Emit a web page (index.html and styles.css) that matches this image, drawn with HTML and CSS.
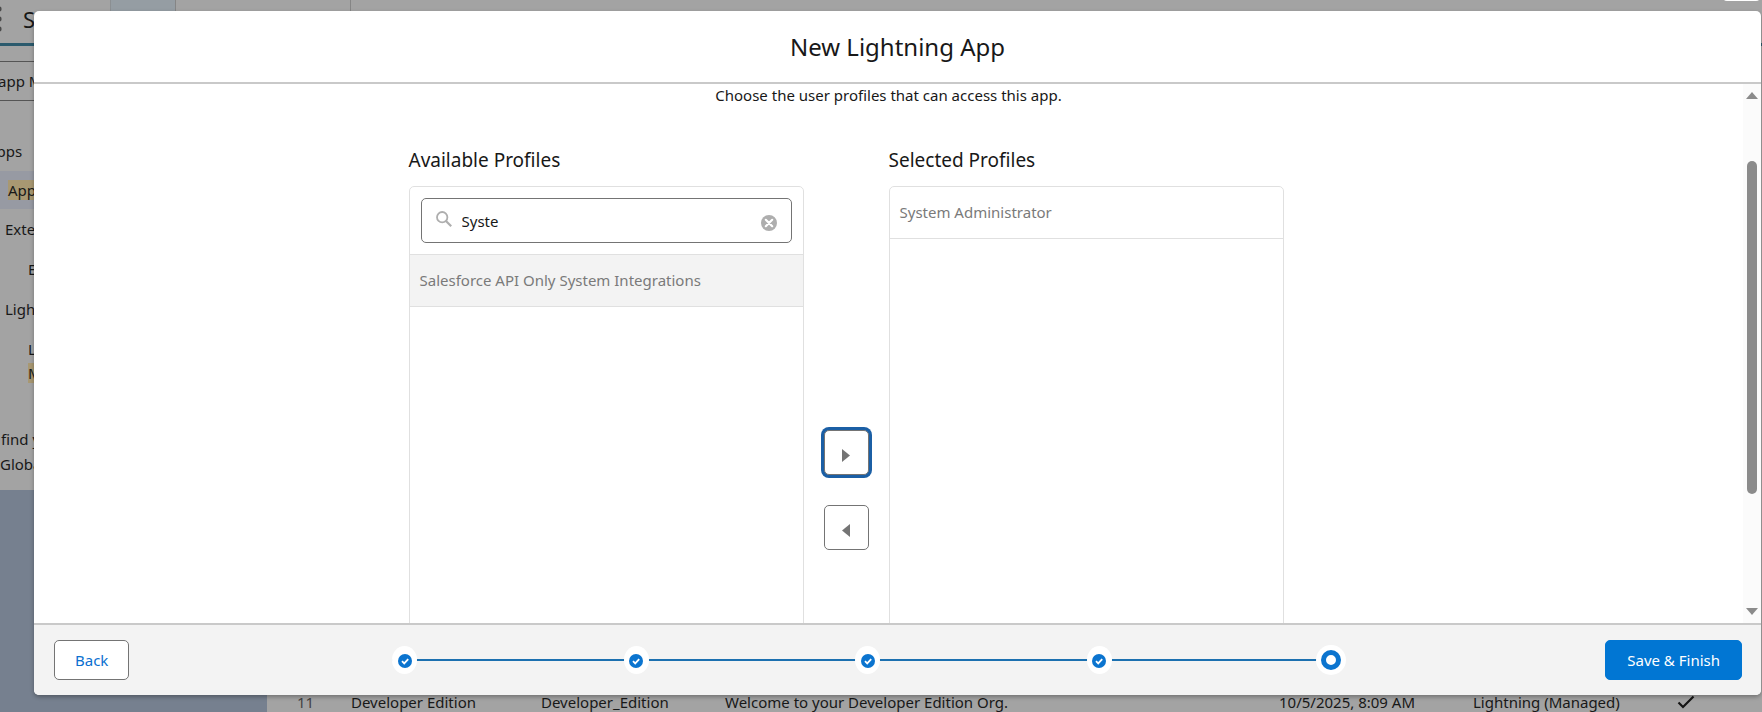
FILE: index.html
```html
<!DOCTYPE html>
<html lang="en">
<head>
<meta charset="utf-8">
<title>New Lightning App</title>
<link rel="stylesheet" href="styles.css">
</head>
<body>
<div class="page">
  <header class="topbar">
    <div class="topbar-name">
      <svg class="launcher" viewBox="0 0 4 28" aria-hidden="true"><g fill="#4a4a4a"><circle cx="-1" cy="4" r="2.6"/><circle cx="-1" cy="14" r="2.6"/><circle cx="-1" cy="24" r="2.6"/></g></svg>
      <span>S</span>
    </div>
    <div class="tab tab-active"></div>
    <div class="tab"></div>
  </header>
  <div class="columns">
    <nav class="sidebar">
      <div class="quickfind">app M</div>
      <ul class="tree">
        <li class="tree-root">Apps</li>
        <li class="tree-current"><mark>App</mark></li>
        <li class="tree-mid">Exte</li>
        <li class="tree-leaf">E</li>
        <li class="tree-mid">Ligh</li>
        <li class="tree-leaf">L<br><mark>M</mark></li>
      </ul>
      <p class="hint">find y<br>Globa</p>
    </nav>
    <main class="list">
      <table class="apps">
        <colgroup><col class="c-num"><col class="c-name"><col class="c-dev"><col class="c-desc"><col class="c-date"><col class="c-type"><col></colgroup>
        <tbody>
          <tr>
            <td class="num">11</td><td>Developer Edition</td><td>Developer_Edition</td><td>Welcome to your Developer Edition Org.</td><td>10/5/2025, 8:09 AM</td><td>Lightning (Managed)</td>
            <td><svg class="tick" viewBox="0 0 18 14" aria-hidden="true"><path d="M1.5 7.5 6 12 16.500 1.500" fill="none" stroke="#151515" stroke-width="2.200"/></svg></td>
          </tr>
        </tbody>
      </table>
    </main>
  </div>
</div>

<button class="close" type="button" aria-label="Close"></button>

<section class="modal" role="dialog" aria-labelledby="title">
  <header class="modal-head"><h1 id="title">New Lightning App</h1></header>
  <div class="modal-body">
    <div class="content">
      <p class="intro">Choose the user profiles that can access this app.</p>
      <div class="picker">
        <h2 class="head-available" id="available">Available Profiles</h2>
        <h2 class="head-selected" id="selected">Selected Profiles</h2>
        <div class="box box-available">
          <div class="search-wrap">
            <div class="search">
              <svg class="search-icon" viewBox="0 0 16 16" aria-hidden="true"><circle cx="6.200" cy="6.200" r="5.200" fill="none" stroke="#aeaeae" stroke-width="1.800"/><path d="M10 10l5.200 5.200" stroke="#aeaeae" stroke-width="2.200"/></svg>
              <input type="text" value="Syste" aria-labelledby="available">
              <button class="clear" type="button" aria-label="Clear">
                <svg viewBox="0 0 16 16" aria-hidden="true"><circle cx="8" cy="8" r="8" fill="#aeaeae"/><path d="M4.800 4.800l6.400 6.400M11.200 4.800l-6.400 6.400" stroke="#fff" stroke-width="2.200" stroke-linecap="round"/></svg>
              </button>
            </div>
          </div>
          <ul class="options"><li class="shaded">Salesforce API Only System Integrations</li></ul>
        </div>
        <div class="movers">
          <button class="mover focused" type="button" aria-label="Add profile"><svg viewBox="0 0 8 13" aria-hidden="true"><path d="M0 0l8 6.500L0 13z" fill="#747474"/></svg></button>
          <button class="mover" type="button" aria-label="Remove profile"><svg viewBox="0 0 8 13" aria-hidden="true"><path d="M8 0L0 6.500 8 13z" fill="#747474"/></svg></button>
        </div>
        <div class="box box-selected">
          <ul class="options" aria-labelledby="selected"><li>System Administrator</li></ul>
        </div>
      </div>
    </div>
    <div class="scrollbar" aria-hidden="true">
      <svg class="arrow" viewBox="0 0 12 7"><path d="M6 0l6 7H0z" fill="#8b8b8b"/></svg>
      <div class="track"><div class="thumb"></div></div>
      <svg class="arrow" viewBox="0 0 12 7"><path d="M6 7L0 0h12z" fill="#8b8b8b"/></svg>
    </div>
  </div>
  <footer class="modal-foot">
    <button class="btn" type="button">Back</button>
    <ol class="progress">
      <li class="step"><svg viewBox="0 0 14 14" aria-label="Complete"><circle cx="7" cy="7" r="7" fill="#0b74cf"/><path d="M4 7.200l2.200 2.200 4-4.300" fill="none" stroke="#fff" stroke-width="1.800"/></svg></li>
      <li class="step"><svg viewBox="0 0 14 14" aria-label="Complete"><circle cx="7" cy="7" r="7" fill="#0b74cf"/><path d="M4 7.200l2.200 2.200 4-4.300" fill="none" stroke="#fff" stroke-width="1.800"/></svg></li>
      <li class="step"><svg viewBox="0 0 14 14" aria-label="Complete"><circle cx="7" cy="7" r="7" fill="#0b74cf"/><path d="M4 7.200l2.200 2.200 4-4.300" fill="none" stroke="#fff" stroke-width="1.800"/></svg></li>
      <li class="step"><svg viewBox="0 0 14 14" aria-label="Complete"><circle cx="7" cy="7" r="7" fill="#0b74cf"/><path d="M4 7.200l2.200 2.200 4-4.300" fill="none" stroke="#fff" stroke-width="1.800"/></svg></li>
      <li class="step current"><span class="ring"></span></li>
    </ol>
    <button class="btn btn-brand" type="button">Save &amp; Finish</button>
  </footer>
</section>
</body>
</html>
```
FILE: styles.css
```css
* { box-sizing: border-box; }
body {
  margin: 0;
  height: 100vh;
  overflow: hidden;
  font: 15px/20px "Segoe UI", "Noto Sans", "Open Sans", sans-serif;
  color: #181818;
}
h1, h2, p, ul, ol { margin: 0; padding: 0; font-weight: 400; list-style: none; }
button, input { font: inherit; color: inherit; }
svg { display: block; }

/* Dimmed setup page */
.page { height: 100vh; display: flex; flex-direction: column; background: #76808f; overflow: hidden; }
.topbar { display: flex; flex: none; height: 46px; background: #a3a3a3; border-bottom: 3px solid #2b5a6d; }
.topbar-name { width: 110px; display: flex; align-items: center; gap: 19px; font-size: 22px; padding-bottom: 6px; }
.launcher { width: 4px; height: 28px; }
.tab { width: 175px; border-right: 1px solid #858585; }
.tab-active { width: 66px; background: #959da3; border-left: 1px solid #8b8f92; }
.columns { flex: 1; display: flex; min-height: 0; }
.sidebar { width: 267px; height: 444px; background: #a3a3a3; padding-top: 15px; white-space: nowrap; overflow: hidden; }
.quickfind { border: solid #555; border-width: 1px 0; height: 40px; line-height: 38px; text-indent: -2px; }
.tree { padding-top: 30px; }
.tree li { line-height: 24px; padding: 8px 0 8px 5px; }
.tree .tree-root { text-indent: -18px; }
.tree .tree-current { background: #979aa3; padding-left: 8px; line-height: 22px; }
.tree .tree-leaf { padding-left: 28px; }
mark { background: #a89872; color: inherit; }
.hint { padding-top: 34px; line-height: 25px; text-indent: 1px; }
.list { flex: 1; display: flex; flex-direction: column; justify-content: flex-end; background: #a3a3a3; }
.apps { width: 100%; table-layout: fixed; border-collapse: collapse; line-height: 20px; white-space: nowrap; }
.apps td { padding: 0; }
.apps .num { padding-left: 30px; color: #444; }
.c-num { width: 84px; }
.c-name { width: 190px; }
.c-dev { width: 184px; }
.c-desc { width: 554px; }
.c-date { width: 194px; }
.c-type { width: 204px; }
.tick { width: 18px; height: 14px; }
.close { position: absolute; top: -30px; right: 2px; width: 37px; height: 31px; border: 0; border-radius: 4px; background: #fff; }

/* Modal */
.modal {
  position: absolute;
  inset: 11px 1px 17px 34px;
  display: flex;
  flex-direction: column;
  border-radius: 5px;
  background: #fff;
  box-shadow: 0 2px 4px rgba(0, 0, 0, .3);
  overflow: hidden;
}
.modal-head { flex: none; padding: 21px 20px 20px; border-bottom: 2px solid #c9c9c9; text-align: center; }
.modal-head h1 { font-size: 24px; line-height: 30px; }
.modal-body { flex: 1; min-height: 0; display: flex; }
.content { flex: 1; overflow: hidden; }
.intro { text-align: center; line-height: 22px; }
.picker {
  display: grid;
  grid-template-columns: 395px 85px 395px;
  width: 960px;
  margin: 40px auto 0;
}
.picker h2 { grid-row: 1; font-size: 19px; line-height: 28px; padding-bottom: 12px; }
.head-available, .box-available { grid-column: 1; }
.head-selected, .box-selected { grid-column: 3; }
.box, .movers { grid-row: 2; }
.box { border: 1px solid #e0e0e0; border-radius: 5px; min-height: 608px; }
.search-wrap { padding: 11px; }
.search { display: flex; align-items: center; gap: 10px; height: 45px; padding: 0 14px; border: 1px solid #747474; border-radius: 5px; }
.search-icon { width: 16px; height: 16px; margin-bottom: 4px; }
.search input { flex: 1; min-width: 0; border: 0; padding: 0; outline: 0; background: none; }
.clear { border: 0; padding: 4px 0 0; background: none; }
.clear svg { width: 16px; height: 16px; }
.options li { padding: 13px 10px; line-height: 25px; color: #7a7a7a; border-bottom: 1px solid #e0e0e0; }
.options .shaded { background: #f3f3f3; border-top: 1px solid #e0e0e0; }
.movers { display: flex; flex-direction: column; align-items: center; justify-content: center; gap: 30px; }
.mover { width: 45px; height: 45px; padding: 6px 0 0; display: grid; place-items: center; border: 1px solid #747474; border-radius: 5px; background: #fff; }
.mover svg { width: 8px; height: 13px; }
.focused { outline: 0; box-shadow: 0 0 0 3px #1b5fa5; }

.scrollbar { width: 18px; display: flex; flex-direction: column; align-items: center; padding: 8px 0; background: #fbfbfb; }
.arrow { width: 12px; height: 7px; }
.track { flex: 1; padding: 62px 0 114px; }
.thumb { width: 10px; height: 100%; border-radius: 5px; background: #8b8b8b; }

/* Footer */
.modal-foot {
  flex: none;
  display: grid;
  grid-template-columns: 338px 1fr 398px;
  align-items: center;
  padding: 15px 19px 15px 20px;
  border-top: 2px solid #c9c9c9;
  background: #f3f3f3;
}
.btn { justify-self: start; height: 40px; padding: 0 20px; border: 1px solid #747474; border-radius: 5px; background: #fff; color: #0b70d0; }
.btn-brand { justify-self: end; padding: 0 21px; border-color: #0176d3; background: #0176d3; color: #fff; }
.progress { display: flex; justify-content: space-between; align-items: center; background: linear-gradient(#1b70b0, #1b70b0) center / 100% 2px no-repeat; }
.step { display: grid; place-items: center; width: 25px; height: 28px; padding-top: 2px; border-radius: 50%; background: #fff; }
.step svg { width: 14px; height: 14px; }
.current { width: 30px; height: 30px; margin: 0 -2px; padding: 0; }
.ring { width: 20px; height: 20px; border: 5px solid #0b74cf; border-radius: 50%; }
```
